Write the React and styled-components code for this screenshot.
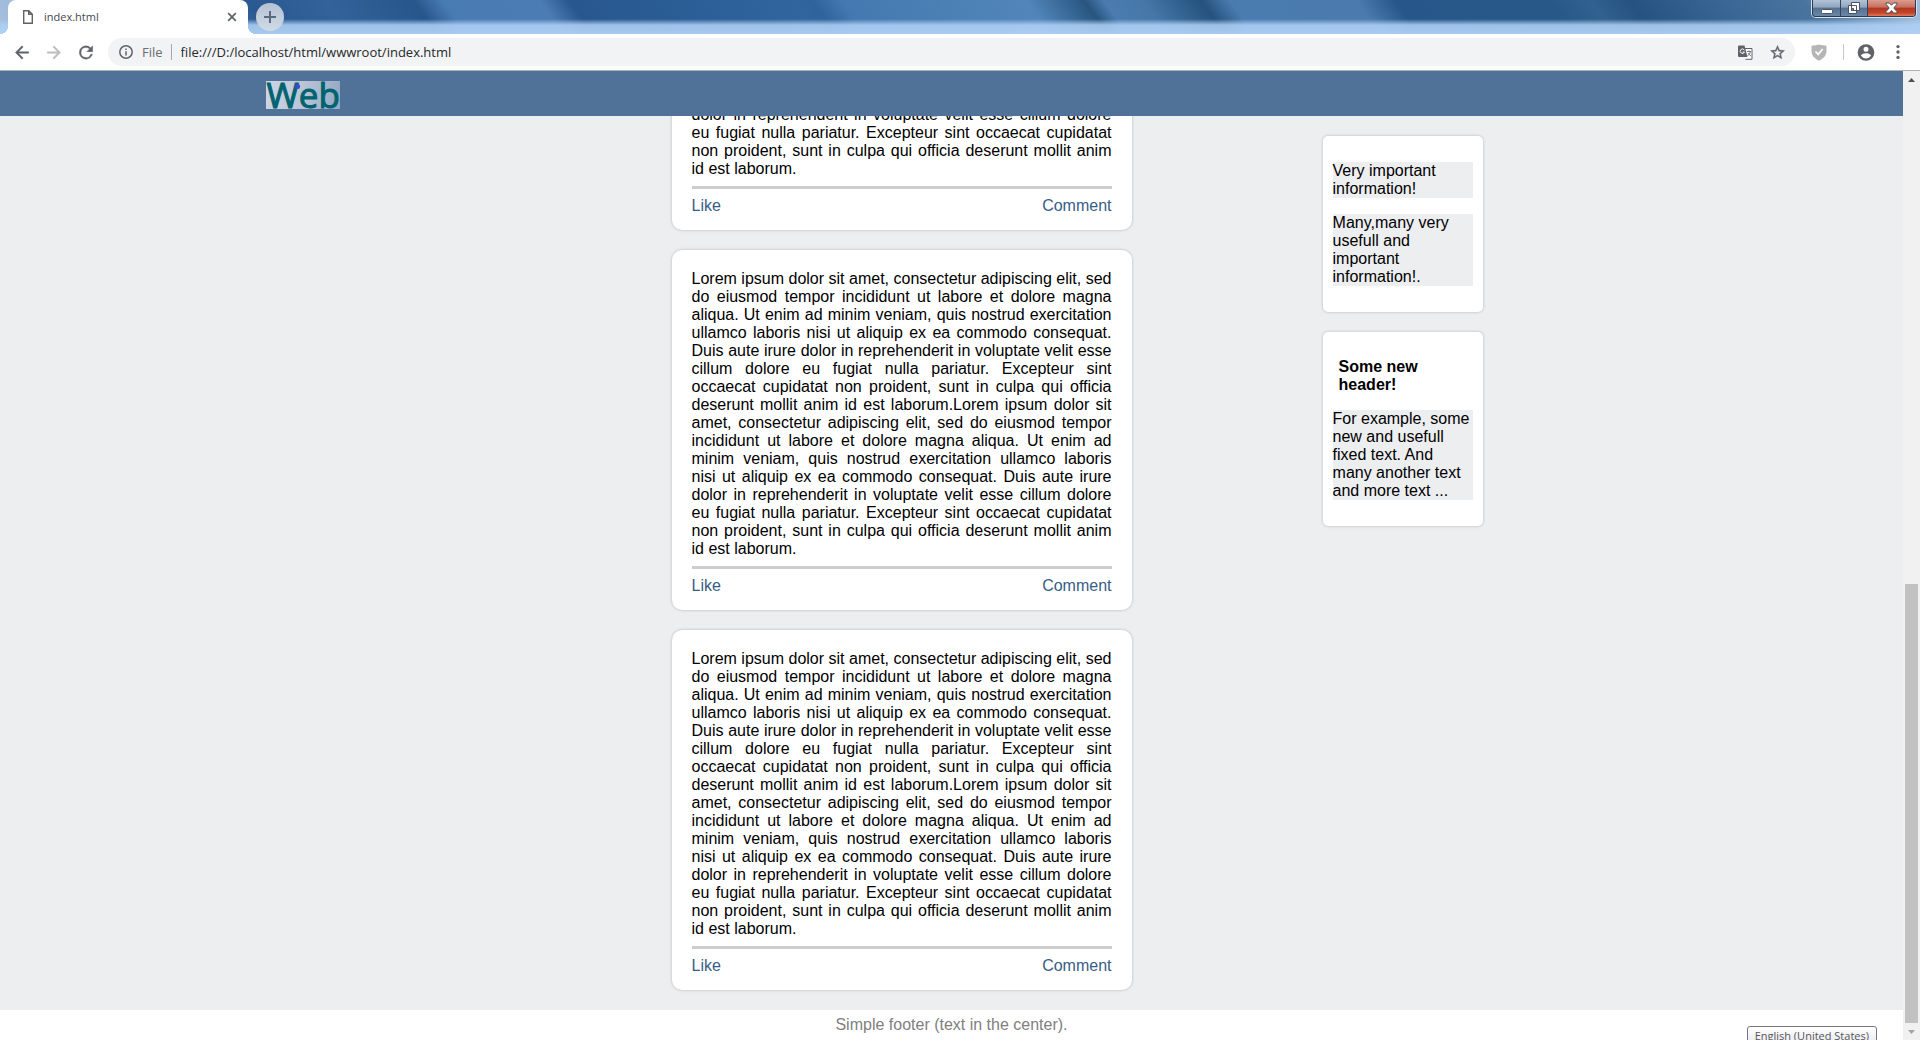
import React from "react";
import styled, { createGlobalStyle } from "styled-components";

const ui = `"Open Sans", "Noto Sans", sans-serif`;
const lorem =
  "Lorem ipsum dolor sit amet, consectetur adipiscing elit, sed do eiusmod tempor incididunt ut labore et dolore magna aliqua. Ut enim ad minim veniam, quis nostrud exercitation ullamco laboris nisi ut aliquip ex ea commodo consequat. Duis aute irure dolor in reprehenderit in voluptate velit esse cillum dolore eu fugiat nulla pariatur. Excepteur sint occaecat cupidatat non proident, sunt in culpa qui officia deserunt mollit anim id est laborum.";

const GlobalStyle = createGlobalStyle`
  * { box-sizing: border-box; }
  body { margin: 0; background: #edeef0; overflow: hidden; }
  button { border: 0; padding: 0; background: none; font: inherit; color: inherit; }
`;

const Browser = styled.div`
  height: 100vh;
  display: flex;
  flex-direction: column;
  overflow: hidden;
  font: 16px/18px "Liberation Sans", Arial, sans-serif;
  color: #000;
`;

const TabStrip = styled.div`
  height: 34px;
  flex: none;
  display: flex;
  align-items: flex-start;
  padding-left: 8px;
  background:
    linear-gradient(180deg, transparent 19px, rgba(174, 208, 244, 0.88) 25px, rgba(176, 210, 248, 0.92) 34px),
    linear-gradient(54deg, #a5bfdd 0, #9db7d8 3%, #5580b4 10%, #2a5890 14%, #336199 18%, #27568d 22.5%, #497bb3 24%, #4c7cb4 29%, #27578e 30.5%, #30659e 42%, #2f639b 43%, #4379b0 44.5%, #5286ba 54%, #27557f 57%, #4a7cb0 58%, #4577a8 60%, #25527e 63%, #4a7cb0 64.5%, #4a7aae 71%, #27568a 73%, #285888 81%, #31618f 83%, #265281 85%, #3a6795 90%, #4a74a0 94%, #9fbcdc 99%);
`;

const Tab = styled.div`
  position: relative;
  width: 240px;
  height: 34px;
  display: flex;
  align-items: center;
  gap: 10px;
  padding: 0 11px 0 14px;
  border-radius: 8px 8px 0 0;
  background: #fff;
  font: 11px/16px ${ui};
  color: #45484d;
  &::before, &::after {
    content: "";
    position: absolute;
    bottom: 0;
    width: 8px;
    height: 8px;
  }
  &::before { left: -8px; background: radial-gradient(circle at 0 0, transparent 8px, #fff 8px); }
  &::after { right: -8px; background: radial-gradient(circle at 100% 0, transparent 8px, #fff 8px); }
`;
const TabTitle = styled.span`flex: 1;`;

const IconButton = styled.button`
  display: flex;
  align-items: center;
  justify-content: center;
  width: ${(p) => p.$w || 20}px;
  height: 20px;
  flex: none;
  svg { display: block; }
`;
const NewTab = styled.button`
  width: 28px;
  height: 28px;
  margin: 3px 0 0 8px;
  border-radius: 50%;
  background: linear-gradient(#b5c2d6, #d0dae6);
  display: grid;
  place-items: center;
`;

const WindowButtons = styled.div`
  display: flex;
  height: 17px;
  margin: 0 4px 0 auto;
  border: 1px solid #2c3c50;
  border-top: 0;
  border-radius: 0 0 4px 4px;
  box-shadow: 0 0 0 1px #d5e2f0;
  overflow: hidden;
`;
const WindowButton = styled.button`
  width: ${(p) => p.$w}px;
  display: grid;
  place-items: center;
  border-right: ${(p) => (p.$close ? 0 : "1px solid #34465c")};
  background: ${(p) =>
    p.$close
      ? "linear-gradient(#dc9d90 0, #c5705f 45%, #b03721 50%, #c5432c 80%, #de7a54 100%)"
      : "linear-gradient(#b3c3d6 0, #8fa5c0 45%, #56718f 50%, #6d88a6 100%)"};
`;

const Toolbar = styled.div`
  height: 37px;
  flex: none;
  display: flex;
  align-items: center;
  padding: 0 12px;
  border-bottom: 1px solid #b1b2b4;
  background: #fff;
`;
const Nav = styled.div`
  display: flex;
  gap: 12px;
  margin-right: 12px;
`;
const Omnibox = styled.form`
  flex: 1;
  height: 28px;
  display: flex;
  align-items: center;
  padding: 0 8px 0 11px;
  border-radius: 14px;
  background: #f1f3f4;
  font: 13px/18px ${ui};
  color: #6a6e73;
`;
const Scheme = styled.label`
  display: flex;
  align-items: center;
  gap: 9px;
  font-size: 13px;
`;
const Divider = styled.span`
  width: 1px;
  height: 16px;
  margin: ${(p) => p.$m};
  background: ${(p) => p.$c};
`;
const Url = styled.input`
  flex: 1;
  border: 0;
  padding: 0;
  outline: 0;
  background: none;
  font: 13px/18px ${ui};
  color: #26282b;
`;
const Actions = styled.div`
  display: flex;
  align-items: center;
  gap: 12px;
`;

const Frame = styled.div`
  flex: 1;
  min-height: 0;
  display: flex;
`;
const Page = styled.div`
  position: relative;
  flex: 1;
  min-width: 0;
  display: flex;
  flex-direction: column;
  background: #edeef0;
`;
const SiteHeader = styled.header`
  height: 45px;
  flex: none;
  display: flex;
  align-items: flex-end;
  padding: 0 14% 7px;
  background: #507299;
`;
const Logo = styled.a`
  position: relative;
  height: 28px;
  background: linear-gradient(100deg, #cfd6e4, #b9c5d6 50%, #93a8c2);
  font: 35px/28px ${ui};
  color: #006371;
  -webkit-text-stroke: 1px #006371;
  text-decoration: none;
  &::after {
    content: "";
    position: absolute;
    left: 29px;
    top: 3px;
    width: 5px;
    height: 5px;
    border-radius: 2px;
    background: #3f48cc;
  }
`;

const Content = styled.div`
  flex: 1;
  min-height: 0;
  overflow: hidden;
  display: grid;
  grid-template-columns: minmax(0, 405fr) 460px minmax(0, 191fr) 160px minmax(0, 154fr);
  grid-template-rows: minmax(0, 1fr);
  padding: 0 14%;
`;
const Feed = styled.main`
  grid-column: 2;
  display: flex;
  flex-direction: column;
  justify-content: flex-end;
  gap: 20px;
  padding-bottom: 20px;
`;
const Post = styled.article`
  flex: none;
  padding: 20px 20px 15px;
  border-radius: 10px;
  background: #fff;
  box-shadow: 0 0 3px rgba(0, 0, 0, 0.25);
`;
const PostText = styled.p`
  margin: 0;
  text-align: justify;
`;
const PostActions = styled.div`
  display: flex;
  justify-content: space-between;
  margin-top: 8px;
  padding-top: 8px;
  border-top: 3px solid #cdcdcd;
`;
const PostLink = styled.a`
  color: #365d86;
  text-decoration: none;
`;

const Sidebar = styled.aside`
  grid-column: 4;
  display: flex;
  flex-direction: column;
  gap: 20px;
  padding-top: 20px;
`;
const Note = styled.section`
  display: flex;
  flex-direction: column;
  gap: 16px;
  padding: 26px 10px;
  border-radius: 5px;
  background: #fff;
  box-shadow: 0 0 3px rgba(0, 0, 0, 0.25);
`;
const NoteTitle = styled.h2`
  margin: 0;
  padding-left: 6px;
  font: bold 16px/18px "Liberation Sans", Arial, sans-serif;
`;
const NoteText = styled.p`
  margin: 0;
  background: #edeef0;
`;

const Footer = styled.footer`
  height: 30px;
  flex: none;
  display: flex;
  align-items: center;
  justify-content: center;
  background: #fff;
  color: #808080;
`;
const Language = styled.div`
  position: absolute;
  right: 26px;
  bottom: -8px;
  height: 22px;
  padding: 0 7px;
  border: 1px solid #767676;
  border-radius: 3px;
  background: linear-gradient(#fff, #e4e5f0);
  font: 11px/18px ${ui};
  color: #575757;
  white-space: nowrap;
`;

const Scrollbar = styled.div`
  width: 17px;
  flex: none;
  display: flex;
  flex-direction: column;
  align-items: center;
  background: #f1f1f1;
`;
const ScrollArrow = styled.button`
  width: 17px;
  height: 17px;
  display: grid;
  place-items: center;
`;
const Track = styled.div`
  flex: 1;
  display: flex;
  flex-direction: column;
  justify-content: flex-end;
`;
const Thumb = styled.div`
  width: 13px;
  height: 47%;
  background: #c1c1c1;
`;

const Svg = ({ size = 16, box = "0 0 24 24", children, ...rest }) => (
  <svg width={size} height={size} viewBox={box} fill="#5f6368" aria-hidden="true" {...rest}>
    {children}
  </svg>
);

const PostCard = ({ text }) => (
  <Post>
    <PostText>{text}</PostText>
    <PostActions>
      <PostLink href="#like">Like</PostLink>
      <PostLink href="#comment">Comment</PostLink>
    </PostActions>
  </Post>
);

export default function App() {
  return (
    <Browser>
      <GlobalStyle />
      <TabStrip>
        <Tab>
          <svg width="12" height="14" viewBox="0 0 12 14" fill="none" stroke="#5f6368" strokeWidth="1.4" aria-hidden="true">
            <path d="M1.7.7h5.1l3.5 3.5v9.1H1.7z M6.7.7v3.6h3.6" />
          </svg>
          <TabTitle>index.html</TabTitle>
          <IconButton $w={10} aria-label="Close tab">
            <svg width="10" height="10" viewBox="0 0 10 10" stroke="#5f6368" strokeWidth="1.7" aria-hidden="true">
              <path d="M1.2 1.2l7.6 7.6M8.8 1.2L1.2 8.8" />
            </svg>
          </IconButton>
        </Tab>
        <NewTab aria-label="New tab">
          <svg width="12" height="12" viewBox="0 0 12 12" stroke="#59697e" strokeWidth="2" aria-hidden="true">
            <path d="M6 0v12M0 6h12" />
          </svg>
        </NewTab>
        <WindowButtons>
          <WindowButton $w={28} aria-label="Minimize">
            <svg width="12" height="14" viewBox="0 0 12 14" aria-hidden="true">
              <rect x=".5" y="8.5" width="11" height="4" rx="1" fill="#fff" stroke="#4a5564" />
            </svg>
          </WindowButton>
          <WindowButton $w={27} aria-label="Restore">
            <svg width="13" height="13" viewBox="0 0 13 13" fill="#fff" stroke="#4a5564" aria-hidden="true">
              <path d="M3.5.5h8v8h-8z M.5 3.5h8v8h-8z" />
              <path d="M3.5 6.5h2v2h-2z" fill="#6d88a6" />
            </svg>
          </WindowButton>
          <WindowButton $w={47} $close aria-label="Close">
            <svg width="13" height="12" viewBox="0 0 13 12" fill="#fff" stroke="#4f4a58" aria-hidden="true">
              <path d="M1 1h3.400l2.100 2.200L8.600 1H12v1.200L8.800 6l3.200 3.600V11H8.600L6.500 8.600 4.400 11H1V9.600L4.200 6 1 2.200z" />
            </svg>
          </WindowButton>
        </WindowButtons>
      </TabStrip>

      <Toolbar>
        <Nav>
          <IconButton aria-label="Back">
            <Svg size={21}><path d="M20 11H7.830l5.590-5.590L12 4l-8 8 8 8 1.410-1.410L7.830 13H20z" stroke="#5f6368" strokeWidth=".5" /></Svg>
          </IconButton>
          <IconButton aria-label="Forward">
            <Svg size={21} fill="#bcbec0"><path d="M12 4l-1.410 1.410L16.170 11H4v2h12.170l-5.580 5.590L12 20l8-8z" stroke="#bcbec0" strokeWidth=".5" /></Svg>
          </IconButton>
          <IconButton aria-label="Reload">
            <Svg size={21}><path d="M17.650 6.350A7.960 7.960 0 0 0 12 4a8 8 0 1 0 7.730 10h-2.080A6 6 0 1 1 12 6c1.660 0 3.140.690 4.220 1.780L13 11h7V4z" stroke="#5f6368" strokeWidth=".5" /></Svg>
          </IconButton>
        </Nav>
        <Omnibox onSubmit={(e) => e.preventDefault()}>
          <Scheme htmlFor="url">
            <svg width="14" height="14" viewBox="0 0 14 14" fill="none" stroke="#5f6368" strokeWidth="1.500" aria-hidden="true">
              <circle cx="7" cy="7" r="6.200" />
              <path d="M7 6.200v4.300M7 3.400v1.500" />
            </svg>
            File
          </Scheme>
          <Divider $m="0 9px 0 8px" $c="#a5a8ab" />
          <Url id="url" defaultValue="file:///D:/localhost/html/wwwroot/index.html" />
          <Actions>
            <IconButton aria-label="Translate this page">
              <svg width="15" height="15" viewBox="0 0 15 15" aria-hidden="true">
                <path d="M6 3.500h8v10.800H7.500" fill="#fff" stroke="#5f6368" />
                <path d="M0 1.500Q0 .5 1 .5h5.500L9.500 12H1Q0 12 0 11z" fill="#5f6368" />
                <path d="M6.300 5A2.200 2.200 0 1 0 6.500 7H4.600" fill="none" stroke="#fff" />
                <path d="M9 6.500h4M11 5.500v1M12.500 6.500Q12 9 9.500 11M10 8l3 3.200" fill="none" stroke="#777b80" />
              </svg>
            </IconButton>
            <IconButton aria-label="Bookmark this page">
              <Svg size={17}><path d="M22 9.240l-7.190-.620L12 2 9.190 8.630 2 9.240l5.460 4.730L5.820 21 12 17.270 18.180 21l-1.630-7.030zM12 15.400l-3.760 2.270 1-4.280-3.320-2.880 4.380-.380L12 6.100l1.710 4.040 4.380.380-3.320 2.880 1 4.280z" stroke="#5f6368" strokeWidth=".5" /></Svg>
            </IconButton>
          </Actions>
        </Omnibox>
        <IconButton $w={48} aria-label="Protection">
          <svg width="16" height="17" viewBox="0 0 16 17" aria-hidden="true">
            <path d="M8 .5C5.800 1.200 3 1.700.5 1.700v5.500C.5 11.500 4 15 8 16.500c4-1.500 7.500-5 7.500-9.300V1.700C13 1.700 10.200 1.200 8 .5z" fill="#b5b5b5" />
            <path d="M4.500 7.500L7.200 10.300 11.700 5" fill="none" stroke="#fff" strokeWidth="1.800" />
          </svg>
        </IconButton>
        <Divider $m="0 12px 0 0" $c="#c5c7ca" />
        <Actions>
          <IconButton aria-label="Profile">
            <Svg size={21}><path d="M12 2a10 10 0 1 0 0 20 10 10 0 0 0 0-20zm0 3a3 3 0 1 1 0 6 3 3 0 0 1 0-6zm0 14.200a7.200 7.200 0 0 1-6-3.220c.030-1.990 4-3.080 6-3.080s5.970 1.090 6 3.080a7.200 7.200 0 0 1-6 3.220z" /></Svg>
          </IconButton>
          <IconButton aria-label="Menu">
            <Svg size={20}><circle cx="12" cy="5.500" r="2" /><circle cx="12" cy="12" r="2" /><circle cx="12" cy="18.500" r="2" /></Svg>
          </IconButton>
        </Actions>
      </Toolbar>

      <Frame>
        <Page>
          <SiteHeader>
            <Logo href="#top">Web</Logo>
          </SiteHeader>
          <Content>
            <Feed>
              {[1, 2, 3].map((id) => (
                <PostCard key={id} text={lorem + lorem} />
              ))}
            </Feed>
            <Sidebar>
              <Note>
                <NoteText>Very important information!</NoteText>
                <NoteText>Many,many very usefull and important information!.</NoteText>
              </Note>
              <Note>
                <NoteTitle>Some new header!</NoteTitle>
                <NoteText>For example, some new and usefull fixed text. And many another text and more text ...</NoteText>
              </Note>
            </Sidebar>
          </Content>
          <Footer>Simple footer (text in the center).</Footer>
          <Language>English (United States)</Language>
        </Page>
        <Scrollbar>
          <ScrollArrow aria-label="Scroll up">
            <svg width="7" height="4" viewBox="0 0 7 4" fill="#505050" aria-hidden="true"><path d="M0 4L3.500 0 7 4z" /></svg>
          </ScrollArrow>
          <Track><Thumb /></Track>
          <ScrollArrow aria-label="Scroll down">
            <svg width="7" height="4" viewBox="0 0 7 4" fill="#a3a3a3" aria-hidden="true"><path d="M0 0h7L3.500 4z" /></svg>
          </ScrollArrow>
        </Scrollbar>
      </Frame>
    </Browser>
  );
}
